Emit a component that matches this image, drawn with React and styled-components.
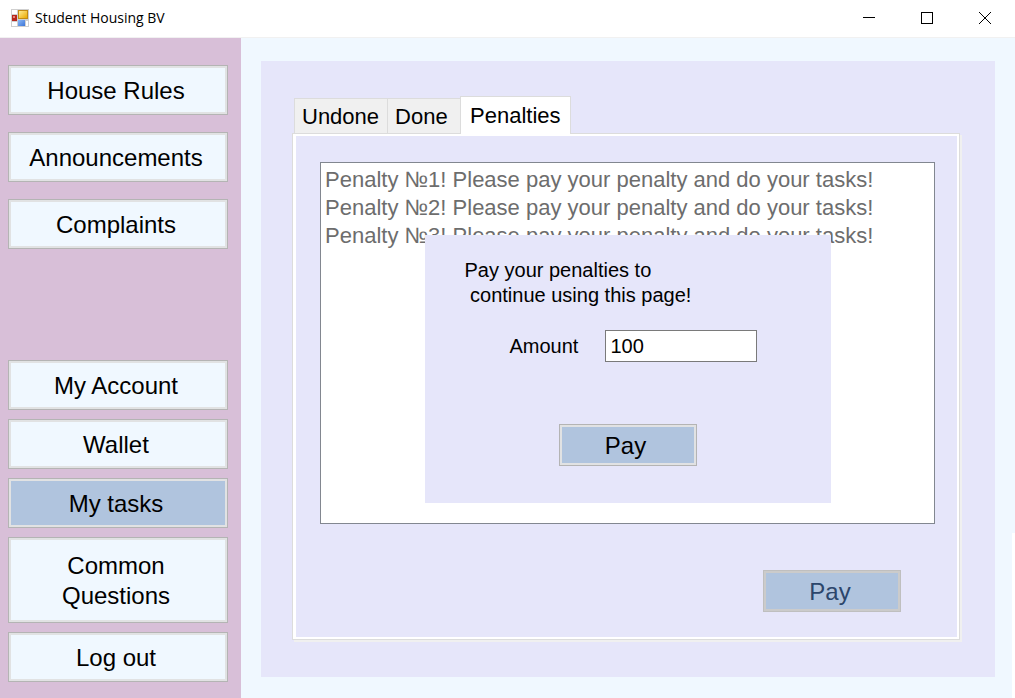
import React from "react";
import styled, { createGlobalStyle } from "styled-components";

const GlobalStyle = createGlobalStyle`
  *, *::before, *::after { box-sizing: border-box; }
  body {
    margin: 0;
    background: #fff;
    color: #000;
    font-family: "Liberation Sans", Arial, sans-serif;
  }
`;

const Window = styled.div`
  display: flex;
  flex-direction: column;
  min-height: 100vh;
`;

const TitleBar = styled.header`
  display: flex;
  align-items: center;
  height: 38px;
  padding: 0 1px 2px 11px;
  background: #fff;
  border-bottom: 1px solid #f1f1f1;
`;

const Title = styled.h1`
  flex: 1;
  margin: 0 0 0 6px;
  font: 400 14px/20px "Open Sans", "Noto Sans", sans-serif;
`;

const WindowButton = styled.button`
  display: flex;
  align-items: center;
  justify-content: center;
  width: 58px;
  height: 36px;
  padding: 0;
  border: 0;
  background: transparent;
`;

const Body = styled.div`
  display: flex;
  flex: 1;
`;

const Sidebar = styled.nav`
  display: flex;
  flex-direction: column;
  justify-content: space-between;
  gap: 24px;
  width: 241px;
  flex: none;
  padding: 27px 13px 16px 8px;
  background: #d8bfd8;
`;

const NavGroup = styled.div`
  display: flex;
  flex-direction: column;
  gap: ${(p) => p.$gap}px;
`;

const Button = styled.button`
  padding: 4px 7px 3px 3px;
  border: 1px solid ${(p) => (p.disabled ? "#bfbfbf" : "#b4b4b4")};
  box-shadow: inset 0 0 0 2px ${(p) => (p.disabled ? "#cbcbcb" : "#e1e2e3")};
  border-radius: 0;
  background: ${(p) => (p.$steel ? "#b0c4de" : "#f0f8ff")};
  color: ${(p) => (p.disabled ? "#2c466b" : "#000")};
  font: 400 24px/30px "Liberation Sans", Arial, sans-serif;
`;

const NavButton = styled(Button)`
  width: 100%;
  height: ${(p) => (p.$tall ? 86 : 50)}px;
  padding-left: 40px;
  padding-right: 44px;
  white-space: ${(p) => (p.$tall ? "normal" : "nowrap")};
  display: flex;
  align-items: center;
  justify-content: center;
`;

const PayButton = styled(Button)`
  width: 138px;
  height: 42px;
`;

const Main = styled.main`
  position: relative;
  display: flex;
  flex: 1;
  padding: 23px 20px 21px;
  background: #f0f8ff;

  &::after {
    content: "";
    position: absolute;
    right: 0;
    bottom: 0;
    width: 3px;
    height: 25%;
    background: #fff;
  }
`;

const Panel = styled.section`
  display: flex;
  flex: 1;
  flex-direction: column;
  padding: 35px 35px 37px 31px;
  background: #e6e6fa;
`;

const Tabs = styled.div`
  display: flex;
  align-items: flex-end;
  padding-left: 2px;
`;

const Tab = styled.button`
  min-width: 73px;
  height: ${(p) => (p.$active ? 38 : 35)}px;
  margin-bottom: ${(p) => (p.$active ? -1 : 0)}px;
  padding: ${(p) => (p.$active ? "0 9px" : "2px 8px 0 7px")};
  border: 1px solid #dcdcdc;
  border-bottom: 0;
  border-right-width: ${(p) => (p.$active ? 1 : 0)}px;
  border-radius: 0;
  background: ${(p) => (p.$active ? "#fff" : "#f0f0f0")};
  color: #000;
  font: 400 22px/28px "Liberation Sans", Arial, sans-serif;
  text-align: left;
  z-index: ${(p) => (p.$active ? 1 : 0)};
`;

const TabPage = styled.div`
  display: flex;
  flex: 1;
  flex-direction: column;
  align-items: flex-end;
  gap: 46px;
  padding: 28px 24px 27px 27px;
  border: 1px solid #dcdcdc;
  box-shadow: inset 3px 0 #fff, inset 0 0 0 2px #fff, 2px 2px #f0f0f0;
`;

const ListBox = styled.div`
  position: relative;
  flex: 1;
  width: 100%;
  min-height: 362px;
  border: 1px solid #828790;
  background: #fff;
`;

const PenaltyList = styled.ul`
  margin: 0;
  padding: 3px 4px;
  list-style: none;
  color: #6d6d6d;
  font-size: 22px;
  line-height: 28px;
`;

const PageActions = styled.div`
  padding-right: 34px;
  display: flex;
`;

const Dialog = styled.form`
  position: absolute;
  top: 72px;
  left: 50%;
  transform: translateX(-50%);
  display: flex;
  flex-direction: column;
  width: 406px;
  height: 268px;
  padding: 23px 40px 37px;
  background: #e6e6fa;
  font-size: 20px;
  line-height: 25px;
`;

const Message = styled.p`
  margin: 0;
  white-space: pre;
`;

const Field = styled.div`
  display: flex;
  align-items: center;
  gap: 27px;
  margin-top: 22px;
  padding-left: 45px;
`;

const AmountInput = styled.input`
  width: 152px;
  height: 32px;
  padding: 0 4px;
  border: 1px solid #7a7a7a;
  border-radius: 0;
  background: #fff;
  color: #000;
  font: 400 20px/25px "Liberation Sans", Arial, sans-serif;
`;

const DialogActions = styled.div`
  display: flex;
  justify-content: center;
  margin-top: auto;
`;

function AppIcon() {
  return (
    <svg width="18" height="18" viewBox="0 0 18 18" aria-hidden="true">
      <defs>
        <linearGradient id="gold" x1="0" y1="0" x2="1" y2="1">
          <stop offset="0" stopColor="#ffeb91" />
          <stop offset="1" stopColor="#eaa900" />
        </linearGradient>
        <linearGradient id="blue" x1="0" y1="0" x2="1" y2="1">
          <stop offset="0" stopColor="#8db8f4" />
          <stop offset="1" stopColor="#3c75d8" />
        </linearGradient>
      </defs>
      <rect width="18" height="18" fill="#cfcfcf" />
      <path d="M1 1h5v4H1zM1 13h5v4H1zM15 12h2v5h-2z" fill="#fff" />
      <rect x="1" y="6" width="5" height="6" fill="#b7271d" />
      <rect x="2" y="7" width="2" height="2" fill="#e58579" />
      <rect x="7" y="1" width="10" height="9" fill="#c28a13" />
      <rect x="8" y="2" width="8" height="7" fill="url(#gold)" />
      <rect x="7" y="11" width="7" height="6" fill="url(#blue)" />
    </svg>
  );
}

const penalties = [1, 2, 3];

export default function App() {
  return (
    <Window>
      <GlobalStyle />
      <TitleBar>
        <AppIcon />
        <Title>Student Housing BV</Title>
        <WindowButton type="button" aria-label="Minimize">
          <svg width="12" height="12" shapeRendering="crispEdges">
            <path d="M0 5.5h12" stroke="#000" />
          </svg>
        </WindowButton>
        <WindowButton type="button" aria-label="Maximize">
          <svg width="12" height="12" shapeRendering="crispEdges">
            <rect x="0.5" y="0.5" width="11" height="11" fill="none" stroke="#000" />
          </svg>
        </WindowButton>
        <WindowButton type="button" aria-label="Close">
          <svg width="12" height="12">
            <path d="M0 0l12 12M12 0L0 12" stroke="#000" />
          </svg>
        </WindowButton>
      </TitleBar>
      <Body>
        <Sidebar>
          <NavGroup $gap={17}>
            <NavButton type="button">House Rules</NavButton>
            <NavButton type="button">Announcements</NavButton>
            <NavButton type="button">Complaints</NavButton>
          </NavGroup>
          <NavGroup $gap={9}>
            <NavButton type="button">My Account</NavButton>
            <NavButton type="button">Wallet</NavButton>
            <NavButton type="button" $steel aria-current="page">My tasks</NavButton>
            <NavButton type="button" $tall>Common Questions</NavButton>
            <NavButton type="button">Log out</NavButton>
          </NavGroup>
        </Sidebar>
        <Main>
          <Panel>
            <Tabs role="tablist">
              <Tab type="button" role="tab" aria-selected="false">Undone</Tab>
              <Tab type="button" role="tab" aria-selected="false">Done</Tab>
              <Tab type="button" role="tab" aria-selected="true" $active>Penalties</Tab>
            </Tabs>
            <TabPage role="tabpanel">
              <ListBox>
                <PenaltyList>
                  {penalties.map((n) => (
                    <li key={n}>Penalty №{n}! Please pay your penalty and do your tasks!</li>
                  ))}
                </PenaltyList>
                <Dialog onSubmit={(e) => e.preventDefault()}>
                  <Message>{"Pay your penalties to\n continue using this page!"}</Message>
                  <Field>
                    <label htmlFor="amount">Amount</label>
                    <AmountInput id="amount" type="text" defaultValue="100" />
                  </Field>
                  <DialogActions>
                    <PayButton type="submit" $steel>Pay</PayButton>
                  </DialogActions>
                </Dialog>
              </ListBox>
              <PageActions>
                <PayButton type="button" $steel disabled>Pay</PayButton>
              </PageActions>
            </TabPage>
          </Panel>
        </Main>
      </Body>
    </Window>
  );
}
